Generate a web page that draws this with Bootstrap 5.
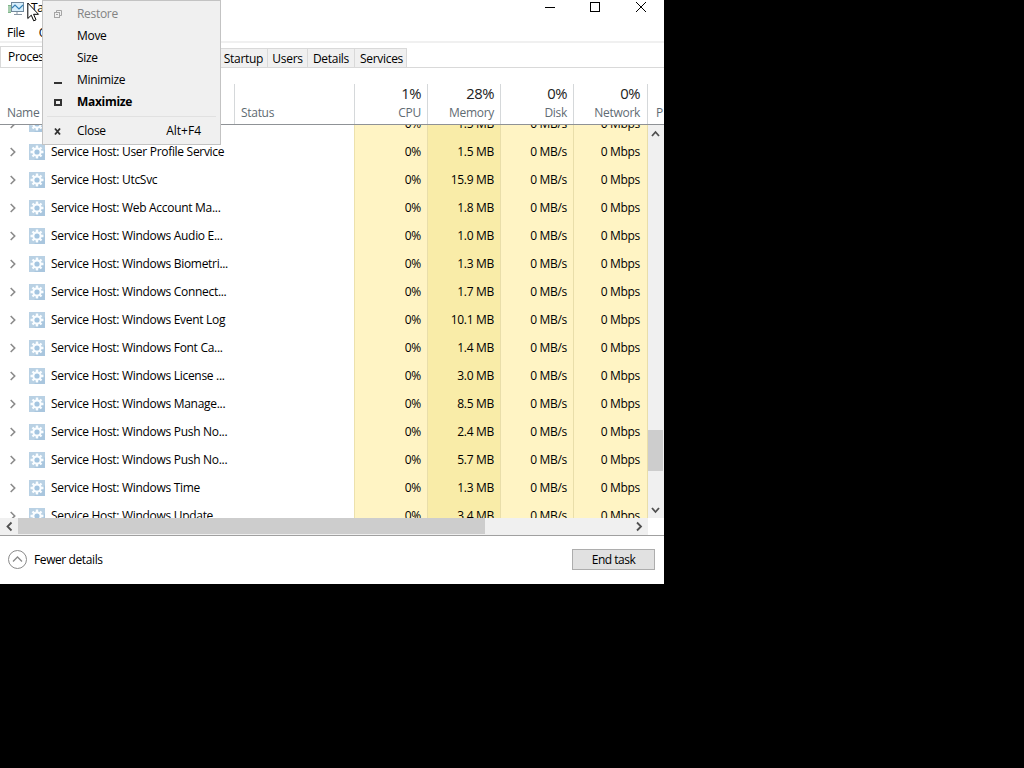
<!DOCTYPE html>
<html lang="en">
<head>
<meta charset="utf-8">
<title>Task Manager</title>
<link rel="stylesheet" href="https://cdn.jsdelivr.net/npm/bootstrap@5.3.0/dist/css/bootstrap.min.css">
<style>
body{background:#000;color:#000;font:12px/16px "Open Sans","Noto Sans",sans-serif;letter-spacing:-.3px;overflow:hidden}
svg{display:block;flex:none}
.win{width:664px;height:584px;background:#fff}
.titlebar{height:22px}
.menubar{height:21px;border-bottom:2px solid #f0f0f0;padding-left:7px}
.menubar span{margin-right:14px;line-height:21px}
.tabstrip{height:25px;border-bottom:1px solid #d9d9d9;padding-top:5px}
.tab-item{height:19px;border:1px solid #d9d9d9;border-left:0;border-bottom:0;background:#f0f0f0;text-align:center;line-height:19px;white-space:nowrap}
.tab-item.current{width:57px;background:#fff;height:21px;margin-top:-2px;padding-left:7px;text-align:left;border-left:1px solid #d9d9d9}
.heads{height:57px;border-bottom:1px solid #8f9296;padding-top:16px;color:#5f6b73}
.heads>div{border-right:1px solid #d5d8da;line-height:16px}
.heads b{display:block;font-size:14.8px;font-weight:400;color:#222;line-height:18px;letter-spacing:-.5px;margin-bottom:3px}
.c-name{width:235px}.c-status{width:120px}.c-num{width:73px;padding-right:6px;text-align:right}.c-net{width:74px;padding-right:7px}
.viewport{height:393px;overflow:hidden}
.rows{width:648px;margin-top:-15px}
.proc{height:28px;line-height:28px;white-space:nowrap}
.proc .c-num{background:#fff4c4;border-right:1px solid #e9deaa}
.proc .c-num.mem{background:#f9eca8}
.proc .c-status{border-right:1px solid #ece1ad}
.chev{margin:0 12px 0 9px}
.label{margin-left:6px}
.vbar{width:16px;background:#f0f0f0}
.vthumb{height:41px;margin-top:290px;background:#cdcdcd;width:15px}
.hbar{height:17px;width:648px;background:#f0f0f0}
.hthumb{width:467px;background:#cdcdcd;height:16px}
.foot{height:49px;border-top:1px solid #a0a0a0;padding:0 9px 1px 8px}
.endtask{width:83px;height:21px;background:#e1e1e1;border:1px solid #adadad;border-radius:0;padding:0;font:inherit;color:#000}
.sysmenu{left:42px;top:0;width:179px;height:145px;background:#f0f0f0;border:1px solid #c3c3c3;padding-top:2px}
.sysmenu .entry{height:22px;padding:0 19px 0 10px}
.sysmenu .entry svg{margin-right:14px}
.sysmenu hr{margin:3px 4px;border-color:#b5b5b5;border-top-width:1px}
.pointer{left:27px;top:2px}
</style>
</head>
<body>
<svg class="d-none">
<symbol id="gear" viewBox="0 0 16 16"><rect width="16" height="16" fill="#a9c6de"/><path d="M0 0h16v5L5 16H0z" fill="#b9d1e4"/><g stroke="#fafdff" stroke-width="2.4"><path d="M8 1.500v13M1.500 8h13M3.500 3.500l9 9M12.500 3.500l-9 9"/></g><circle cx="8" cy="8" r="4.600" fill="#fafdff"/><circle cx="8" cy="8" r="2.600" fill="#a4c5e0"/></symbol>
<symbol id="right" viewBox="0 0 8 10"><path d="M1.700 1l4 4-4 4" fill="none" stroke="#8b8b8b" stroke-width="1.600"/></symbol>
</svg>
<main class="win position-relative">
  <header class="titlebar d-flex">
    <svg width="17" height="16" style="margin-left:8px" viewBox="0 0 17 16"><path d="M0 5h3v8H0z" fill="#7eb58a"/><path d="M0 7h3M0 9h3M0 11h3" stroke="#d2e8d5"/><rect x="3.500" y="2.500" width="12" height="9" fill="#d8effc" stroke="#71889b"/><path d="M4 8l3-3 4 4 4-4" fill="none" stroke="#3581b5" stroke-width="1.200"/><path d="M9 12v2M6 14.500h8" stroke="#8796a3"/></svg>
    <span style="margin-left:6px">Task</span>
    <svg class="ms-auto" style="margin-right:17px" width="102" height="14" viewBox="0 0 102 14" fill="none" stroke="#000"><path d="M0 7.500h10"/><rect x="45.500" y="2.500" width="9" height="9"/><path d="M91 2l10 10M101 2L91 12"/></svg>
  </header>
  <nav class="menubar d-flex"><span>File</span><span>Options</span></nav>
  <div class="tabstrip d-flex">
    <div class="tab-item current">Processes</div><div class="tab-item" style="width:163px"></div>
    <div class="tab-item" style="width:48px">Startup</div><div class="tab-item" style="width:40px">Users</div><div class="tab-item" style="width:47px">Details</div><div class="tab-item" style="width:52px;padding-left:2px">Services</div>
  </div>
  <div class="heads d-flex">
    <div class="c-name d-flex align-items-end"><span style="padding:0 0 3px 7px">Name</span></div>
    <div class="c-status d-flex align-items-end"><span style="padding:0 0 3px 6px">Status</span></div>
    <div class="c-num"><b>1%</b>CPU</div><div class="c-num"><b>28%</b>Memory</div><div class="c-num"><b>0%</b>Disk</div><div class="c-num c-net"><b>0%</b>Network</div>
    <div class="border-0 d-flex align-items-end"><span style="padding:0 0 3px 8px">P</span></div>
  </div>
  <div class="viewport d-flex">
    <div class="rows" id="rows"></div>
    <div class="vbar d-flex flex-column">
      <svg width="15" height="15" viewBox="0 0 15 15"><path d="M4 11l3.500-4L11 11" fill="none" stroke="#505050" stroke-width="1.800"/></svg>
      <div class="vthumb"></div>
      <svg class="mt-auto" width="15" height="15" viewBox="0 0 15 15"><path d="M4 5l3.500 4L11 5" fill="none" stroke="#505050" stroke-width="1.800"/></svg>
    </div>
  </div>
  <div class="hbar d-flex">
    <svg width="18" height="16" viewBox="0 0 18 16"><path d="M11.500 4.500L7.500 8.500l4 4" fill="none" stroke="#505050" stroke-width="1.800"/></svg>
    <div class="hthumb"></div>
    <svg class="ms-auto" width="16" height="16" viewBox="0 0 16 16"><path d="M5 4.500l4 4-4 4" fill="none" stroke="#505050" stroke-width="1.800"/></svg>
  </div>
  <footer class="foot d-flex align-items-center">
    <svg width="19" height="19" viewBox="0 0 19 19" fill="none"><circle cx="9.500" cy="9.500" r="9" stroke="#8a8a8a"/><path d="M5 11.500l4.500-4.500 4.500 4.500" stroke="#8a8a8a" stroke-width="1.300"/></svg>
    <span style="margin-left:7px;letter-spacing:-.4px">Fewer details</span>
    <button class="btn endtask ms-auto" style="letter-spacing:-.5px">End task</button>
  </footer>

  <div class="sysmenu position-absolute">
    <div class="entry d-flex align-items-center" style="color:#838383"><svg width="10" height="10" viewBox="0 0 10 10" fill="none" stroke="#a5a5a5"><path d="M3.500 3V1.500h5v5H7"/><rect x="1.500" y="3.500" width="5" height="5"/><path d="M3 5.500h2"/></svg>Restore</div>
    <div class="entry d-flex align-items-center"><svg width="10" height="10"></svg>Move</div>
    <div class="entry d-flex align-items-center"><svg width="10" height="10"></svg>Size</div>
    <div class="entry d-flex align-items-center"><svg width="10" height="10" viewBox="0 0 10 10"><path d="M1 7h8v2H1z" fill="#333"/></svg>Minimize</div>
    <div class="entry d-flex align-items-center fw-bold"><svg width="10" height="10" viewBox="0 0 10 10"><rect x="2" y="3" width="6" height="5" fill="none" stroke="#333" stroke-width="2"/></svg>Maximize</div>
    <hr>
    <div class="entry d-flex align-items-center"><svg width="10" height="10" viewBox="0 0 10 10"><path d="M2 2.500l5 6M7 2.500l-5 6" stroke="#333" stroke-width="1.900"/></svg>Close<span class="ms-auto" style="letter-spacing:0">Alt+F4</span></div>
  </div>
  <svg class="pointer position-absolute" width="13" height="20" viewBox="0 0 13 20"><path d="M.8 1v15.500l3.500-3.300 2.400 5.600 2.300-1-2.400-5.500h4.900z" fill="#fff" stroke="#000"/></svg>
</main>
<script src="https://cdn.jsdelivr.net/npm/bootstrap@5.3.0/dist/js/bootstrap.bundle.min.js"></script>
<script>
const services=[["Time Broker","1.5"],["User Profile Service","1.5"],["UtcSvc","15.9"],["Web Account Ma...","1.8"],["Windows Audio E...","1.0"],["Windows Biometri...","1.3"],["Windows Connect...","1.7"],["Windows Event Log","10.1"],["Windows Font Ca...","1.4"],["Windows License ...","3.0"],["Windows Manage...","8.5"],["Windows Push No...","2.4"],["Windows Push No...","5.7"],["Windows Time","1.3"],["Windows Update","3.4"]];
document.getElementById("rows").innerHTML=services.map(([n,m])=>`<div class="proc d-flex"><div class="c-name d-flex align-items-center"><svg class="chev" width="8" height="10"><use href="#right"/></svg><svg width="16" height="16"><use href="#gear"/></svg><span class="label">Service Host: ${n}</span></div><div class="c-status"></div><div class="c-num">0%</div><div class="c-num mem">${m} MB</div><div class="c-num">0 MB/s</div><div class="c-num c-net">0 Mbps</div></div>`).join("");
</script>
</body>
</html>
